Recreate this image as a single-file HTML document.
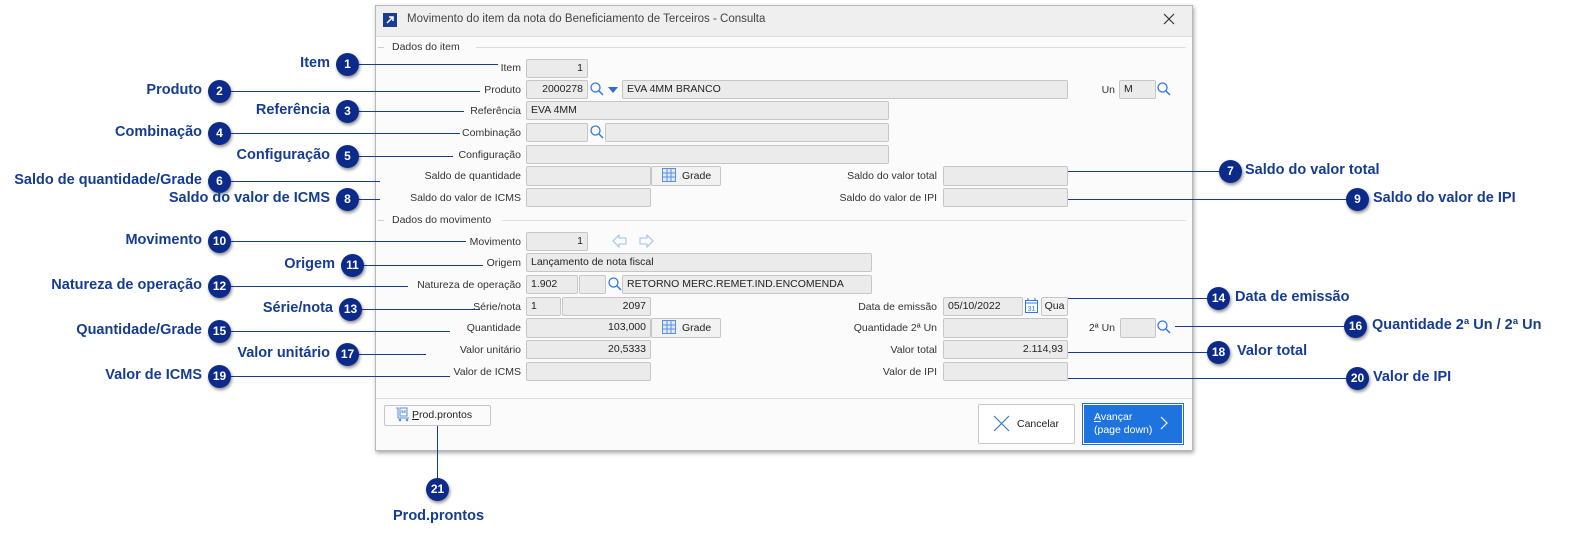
<!DOCTYPE html>
<html><head><meta charset="utf-8"><style>
*{box-sizing:border-box;margin:0;padding:0}
body{width:1592px;height:550px;background:#fff;position:relative;overflow:hidden;font-family:"Liberation Sans",sans-serif}
.a{position:absolute}
#dlg{left:375px;top:5px;width:818px;height:446px;background:#fbfbfb;border:1px solid #b8b8b8;box-shadow:1px 2px 4px rgba(0,0,0,.35)}
#tb{left:375px;top:5px;width:818px;height:31px;background:#efefef;border:1px solid #b8b8b8;border-bottom:none}
.t{font-size:11px;color:#333;white-space:nowrap}
.l{font-size:10.5px;color:#333;text-align:right;white-space:nowrap}
.i{background:#ebebeb;border:1px solid #c6c6c6;border-radius:2px;font-size:10.5px;color:#222;padding:1px 4px;line-height:15px;white-space:nowrap;overflow:hidden}
.r{text-align:right}
.btn{background:#f2f2f2;border:1px solid #c6c6c6;border-radius:2px;font-size:10.5px;color:#222;line-height:16px}
.b{width:23px;height:23px;border-radius:50%;background:#0b2a8a;color:#fff;font-size:12px;font-weight:bold;text-align:center;line-height:23px;box-shadow:1px 2px 3px rgba(0,0,0,.45)}
.c{font-size:14.5px;font-weight:bold;color:#163c91;white-space:nowrap}
.ln{height:1px;background:#163c91}
</style></head><body>
<div class="a" id="dlg"></div>
<div class="a" id="tb"></div>
<div class="a" style="left:383px;top:13px;width:14px;height:14px;background:#1b3d8f"><svg width="14" height="14"><path d="M4 10 L10 4 M6 4 H10 V8" stroke="#fff" stroke-width="1.5" fill="none"/></svg></div>
<div class="a t" style="left:407px;top:13px;font-size:11.5px;color:#444">Movimento do item da nota do Beneficiamento de Terceiros - Consulta</div>
<div class="a" style="left:1163px;top:12px"><svg width="12" height="12"><path d="M1 1L11 11M11 1L1 11" stroke="#333" stroke-width="1.2"/></svg></div>
<div class="a" style="left:376px;top:36px;width:816px;height:1px;background:#ddd"></div>
<!-- sections -->
<div class="a" style="left:378px;top:47px;width:6px;height:1px;background:#ccc"></div>
<div class="a t" style="left:392px;top:41px;font-size:10.5px">Dados do item</div>
<div class="a" style="left:476px;top:47px;width:710px;height:1px;background:#ddd"></div>
<div class="a" style="left:378px;top:220px;width:6px;height:1px;background:#ccc"></div>
<div class="a t" style="left:392px;top:214px;font-size:10.5px">Dados do movimento</div>
<div class="a" style="left:502px;top:220px;width:684px;height:1px;background:#ddd"></div>

<!-- labels -->
<div class="a l" style="right:1071px;top:62px">Item</div>
<div class="a l" style="right:1071px;top:84px">Produto</div>
<div class="a l" style="right:1071px;top:105px">Referência</div>
<div class="a l" style="right:1071px;top:127px">Combinação</div>
<div class="a l" style="right:1071px;top:149px">Configuração</div>
<div class="a l" style="right:1071px;top:170px">Saldo de quantidade</div>
<div class="a l" style="right:1071px;top:192px">Saldo do valor de ICMS</div>
<div class="a l" style="right:1071px;top:236px">Movimento</div>
<div class="a l" style="right:1071px;top:257px">Origem</div>
<div class="a l" style="right:1071px;top:279px">Natureza de operação</div>
<div class="a l" style="right:1071px;top:301px">Série/nota</div>
<div class="a l" style="right:1071px;top:322px">Quantidade</div>
<div class="a l" style="right:1071px;top:344px">Valor unitário</div>
<div class="a l" style="right:1071px;top:366px">Valor de ICMS</div>
<div class="a l" style="right:655px;top:170px">Saldo do valor total</div>
<div class="a l" style="right:655px;top:192px">Saldo do valor de IPI</div>
<div class="a l" style="right:655px;top:301px">Data de emissão</div>
<div class="a l" style="right:655px;top:322px">Quantidade 2ª Un</div>
<div class="a l" style="right:655px;top:344px">Valor total</div>
<div class="a l" style="right:655px;top:366px">Valor de IPI</div>
<div class="a l" style="right:477px;top:84px">Un</div>
<div class="a l" style="right:477px;top:322px">2ª Un</div>

<!-- inputs -->
<div class="a i r" style="left:526px;top:59px;width:62px;height:19px">1</div>
<div class="a i r" style="left:526px;top:80px;width:62px;height:19px">2000278</div>
<div class="a i" style="left:622px;top:80px;width:446px;height:19px">EVA 4MM BRANCO</div>
<div class="a i" style="left:1119px;top:80px;width:37px;height:19px">M</div>
<div class="a i" style="left:526px;top:101px;width:363px;height:19px">EVA 4MM</div>
<div class="a i" style="left:526px;top:123px;width:62px;height:19px"></div>
<div class="a i" style="left:605px;top:123px;width:284px;height:19px"></div>
<div class="a i" style="left:526px;top:145px;width:363px;height:19px"></div>
<div class="a i" style="left:526px;top:166px;width:125px;height:20px"></div>
<div class="a i" style="left:526px;top:188px;width:125px;height:19px"></div>
<div class="a i" style="left:943px;top:166px;width:125px;height:20px"></div>
<div class="a i" style="left:943px;top:188px;width:125px;height:19px"></div>
<div class="a i r" style="left:526px;top:232px;width:62px;height:19px">1</div>
<div class="a i" style="left:526px;top:253px;width:346px;height:19px">Lançamento de nota fiscal</div>
<div class="a i" style="left:526px;top:275px;width:52px;height:19px">1.902</div>
<div class="a i" style="left:579px;top:275px;width:27px;height:19px"></div>
<div class="a i" style="left:622px;top:275px;width:250px;height:19px">RETORNO MERC.REMET.IND.ENCOMENDA</div>
<div class="a i" style="left:526px;top:297px;width:35px;height:19px">1</div>
<div class="a i r" style="left:562px;top:297px;width:89px;height:19px">2097</div>
<div class="a i" style="left:943px;top:297px;width:80px;height:19px">05/10/2022</div>
<div class="a btn" style="left:1041px;top:297px;width:27px;height:19px;text-align:center">Qua</div>
<div class="a i r" style="left:526px;top:318px;width:125px;height:20px">103,000</div>
<div class="a i" style="left:943px;top:318px;width:125px;height:20px"></div>
<div class="a i" style="left:1120px;top:318px;width:36px;height:20px"></div>
<div class="a i r" style="left:526px;top:340px;width:125px;height:19px">20,5333</div>
<div class="a i r" style="left:943px;top:340px;width:125px;height:19px">2.114,93</div>
<div class="a i" style="left:526px;top:362px;width:125px;height:19px"></div>
<div class="a i" style="left:943px;top:362px;width:125px;height:19px"></div>

<!-- grade buttons -->
<div class="a btn" style="left:651px;top:166px;width:70px;height:20px;padding-left:30px;line-height:18px">Grade</div>
<div class="a btn" style="left:651px;top:318px;width:70px;height:20px;padding-left:30px;line-height:18px">Grade</div>
<svg class="a" style="left:662px;top:168px" width="15" height="15"><g stroke="#5b8fd8" fill="#dfeaf8"><rect x="0.5" y="0.5" width="13" height="13"/></g><path d="M5 1V14M9 1V14M1 5H14M1 9H14" stroke="#5b8fd8"/></svg>
<svg class="a" style="left:662px;top:320px" width="15" height="15"><g stroke="#5b8fd8" fill="#dfeaf8"><rect x="0.5" y="0.5" width="13" height="13"/></g><path d="M5 1V14M9 1V14M1 5H14M1 9H14" stroke="#5b8fd8"/></svg>

<!-- search icons -->
<svg class="a" style="left:590px;top:82px" width="14" height="14"><circle cx="5.5" cy="5.5" r="4.5" stroke="#2f7ae0" stroke-width="1.3" fill="none"/><path d="M9 9L13 13" stroke="#2f7ae0" stroke-width="1.5"/></svg>
<svg class="a" style="left:608px;top:87px" width="10" height="6"><path d="M0 0H10L5 6Z" fill="#2f6bd0"/></svg>
<svg class="a" style="left:1157px;top:82px" width="14" height="14"><circle cx="5.5" cy="5.5" r="4.5" stroke="#2f7ae0" stroke-width="1.3" fill="none"/><path d="M9 9L13 13" stroke="#2f7ae0" stroke-width="1.5"/></svg>
<svg class="a" style="left:590px;top:125px" width="14" height="14"><circle cx="5.5" cy="5.5" r="4.5" stroke="#2f7ae0" stroke-width="1.3" fill="none"/><path d="M9 9L13 13" stroke="#2f7ae0" stroke-width="1.5"/></svg>
<svg class="a" style="left:608px;top:277px" width="14" height="14"><circle cx="5.5" cy="5.5" r="4.5" stroke="#2f7ae0" stroke-width="1.3" fill="none"/><path d="M9 9L13 13" stroke="#2f7ae0" stroke-width="1.5"/></svg>
<svg class="a" style="left:1157px;top:320px" width="14" height="14"><circle cx="5.5" cy="5.5" r="4.5" stroke="#2f7ae0" stroke-width="1.3" fill="none"/><path d="M9 9L13 13" stroke="#2f7ae0" stroke-width="1.5"/></svg>
<svg class="a" style="left:1025px;top:298px" width="14" height="16"><rect x="0.5" y="2.5" width="12" height="12" stroke="#2f7ae0" fill="#fff"/><path d="M1 5H13M3 0V3M10 0V3" stroke="#2f7ae0"/><text x="6.5" y="13" font-size="7" font-family="Liberation Sans" fill="#2f7ae0" text-anchor="middle">31</text></svg>
<!-- arrows -->
<svg class="a" style="left:612px;top:234px" width="50" height="14"><path d="M1 7L7 1V4H14V10H7V13Z" fill="none" stroke="#9cc0ee"/><path d="M41 7L35 1V4H28V10H35V13Z" fill="none" stroke="#9cc0ee"/></svg>

<!-- footer -->
<div class="a" style="left:376px;top:398px;width:816px;height:1px;background:#ddd"></div>
<div class="a btn" style="left:384px;top:405px;width:107px;height:21px;background:#fbfbfb;padding-left:27px;line-height:19px"><u>P</u>rod.prontos</div>
<svg class="a" style="left:395px;top:407px" width="16" height="15"><path d="M1 1H3V11H14M5 1H12V9H5Z" stroke="#5b8fd8" fill="none"/><circle cx="5" cy="13" r="1.3" fill="#5b8fd8"/><circle cx="12" cy="13" r="1.3" fill="#5b8fd8"/><path d="M7 3V6M10 3V6M7 5H10" stroke="#5b8fd8"/></svg>
<div class="a btn" style="left:978px;top:404px;width:97px;height:40px;background:#fff;padding-left:38px;line-height:38px">Cancelar</div>
<svg class="a" style="left:993px;top:415px" width="17" height="17"><path d="M1 1L16 16M16 1L1 16" stroke="#2f7ae0" stroke-width="1.2"/></svg>
<div class="a" style="left:1082px;top:403px;width:102px;height:42px;border:1px solid #1f6fd6"></div>
<div class="a" style="left:1084px;top:405px;width:98px;height:38px;background:#1f73de;color:#fff;font-size:10.5px;line-height:13px;padding:6px 0 0 10px"><u>A</u>vançar<br>(page down)</div>
<svg class="a" style="left:1160px;top:416px" width="8" height="14"><path d="M1 1L7 7L1 13" stroke="#fff" fill="none" stroke-width="1.2"/></svg>

<!-- callout lines -->
<div class="a ln" style="left:358px;top:64px;width:140px"></div>
<div class="a ln" style="left:230px;top:91px;width:250px"></div>
<div class="a ln" style="left:358px;top:111px;width:106px"></div>
<div class="a ln" style="left:230px;top:133px;width:230px"></div>
<div class="a ln" style="left:358px;top:156px;width:95px"></div>
<div class="a ln" style="left:230px;top:181px;width:150px"></div>
<div class="a ln" style="left:358px;top:199px;width:22px"></div>
<div class="a ln" style="left:230px;top:241px;width:236px"></div>
<div class="a ln" style="left:363px;top:265px;width:120px"></div>
<div class="a ln" style="left:230px;top:286px;width:178px"></div>
<div class="a ln" style="left:361px;top:309px;width:119px"></div>
<div class="a ln" style="left:230px;top:331px;width:220px"></div>
<div class="a ln" style="left:358px;top:354px;width:68px"></div>
<div class="a ln" style="left:230px;top:376px;width:220px"></div>
<div class="a" style="left:437px;top:426px;width:1px;height:52px;background:#163c91"></div>
<div class="a ln" style="left:1068px;top:171px;width:152px"></div>
<div class="a ln" style="left:1068px;top:199px;width:280px"></div>
<div class="a ln" style="left:1068px;top:298px;width:140px"></div>
<div class="a ln" style="left:1175px;top:326px;width:170px"></div>
<div class="a ln" style="left:1068px;top:352px;width:140px"></div>
<div class="a ln" style="left:1068px;top:378px;width:280px"></div>

<!-- badges -->
<div class="a b" style="left:336px;top:53px">1</div>
<div class="a b" style="left:208px;top:80px">2</div>
<div class="a b" style="left:336px;top:100px">3</div>
<div class="a b" style="left:208px;top:122px">4</div>
<div class="a b" style="left:336px;top:145px">5</div>
<div class="a b" style="left:208px;top:170px">6</div>
<div class="a b" style="left:1219px;top:160px">7</div>
<div class="a b" style="left:336px;top:188px">8</div>
<div class="a b" style="left:1346px;top:188px">9</div>
<div class="a b" style="left:208px;top:230px">10</div>
<div class="a b" style="left:341px;top:254px">11</div>
<div class="a b" style="left:208px;top:275px">12</div>
<div class="a b" style="left:339px;top:298px">13</div>
<div class="a b" style="left:1207px;top:287px">14</div>
<div class="a b" style="left:208px;top:320px">15</div>
<div class="a b" style="left:1344px;top:315px">16</div>
<div class="a b" style="left:336px;top:343px">17</div>
<div class="a b" style="left:1207px;top:341px">18</div>
<div class="a b" style="left:208px;top:365px">19</div>
<div class="a b" style="left:1346px;top:367px">20</div>
<div class="a b" style="left:426px;top:478px">21</div>

<!-- callout labels -->
<div class="a c" style="right:1262px;top:55px">Item</div>
<div class="a c" style="right:1390px;top:82px">Produto</div>
<div class="a c" style="right:1262px;top:102px">Referência</div>
<div class="a c" style="right:1390px;top:124px">Combinação</div>
<div class="a c" style="right:1262px;top:147px">Configuração</div>
<div class="a c" style="right:1390px;top:172px">Saldo de quantidade/Grade</div>
<div class="a c" style="right:1262px;top:190px">Saldo do valor de ICMS</div>
<div class="a c" style="right:1390px;top:232px">Movimento</div>
<div class="a c" style="right:1257px;top:256px">Origem</div>
<div class="a c" style="right:1390px;top:277px">Natureza de operação</div>
<div class="a c" style="right:1259px;top:300px">Série/nota</div>
<div class="a c" style="right:1390px;top:322px">Quantidade/Grade</div>
<div class="a c" style="right:1262px;top:345px">Valor unitário</div>
<div class="a c" style="right:1390px;top:367px">Valor de ICMS</div>
<div class="a c" style="left:1245px;top:162px">Saldo do valor total</div>
<div class="a c" style="left:1373px;top:190px">Saldo do valor de IPI</div>
<div class="a c" style="left:1235px;top:289px">Data de emissão</div>
<div class="a c" style="left:1372px;top:317px">Quantidade 2ª Un / 2ª Un</div>
<div class="a c" style="left:1237px;top:343px">Valor total</div>
<div class="a c" style="left:1373px;top:369px">Valor de IPI</div>
<div class="a c" style="left:393px;top:508px">Prod.prontos</div>
</body></html>
